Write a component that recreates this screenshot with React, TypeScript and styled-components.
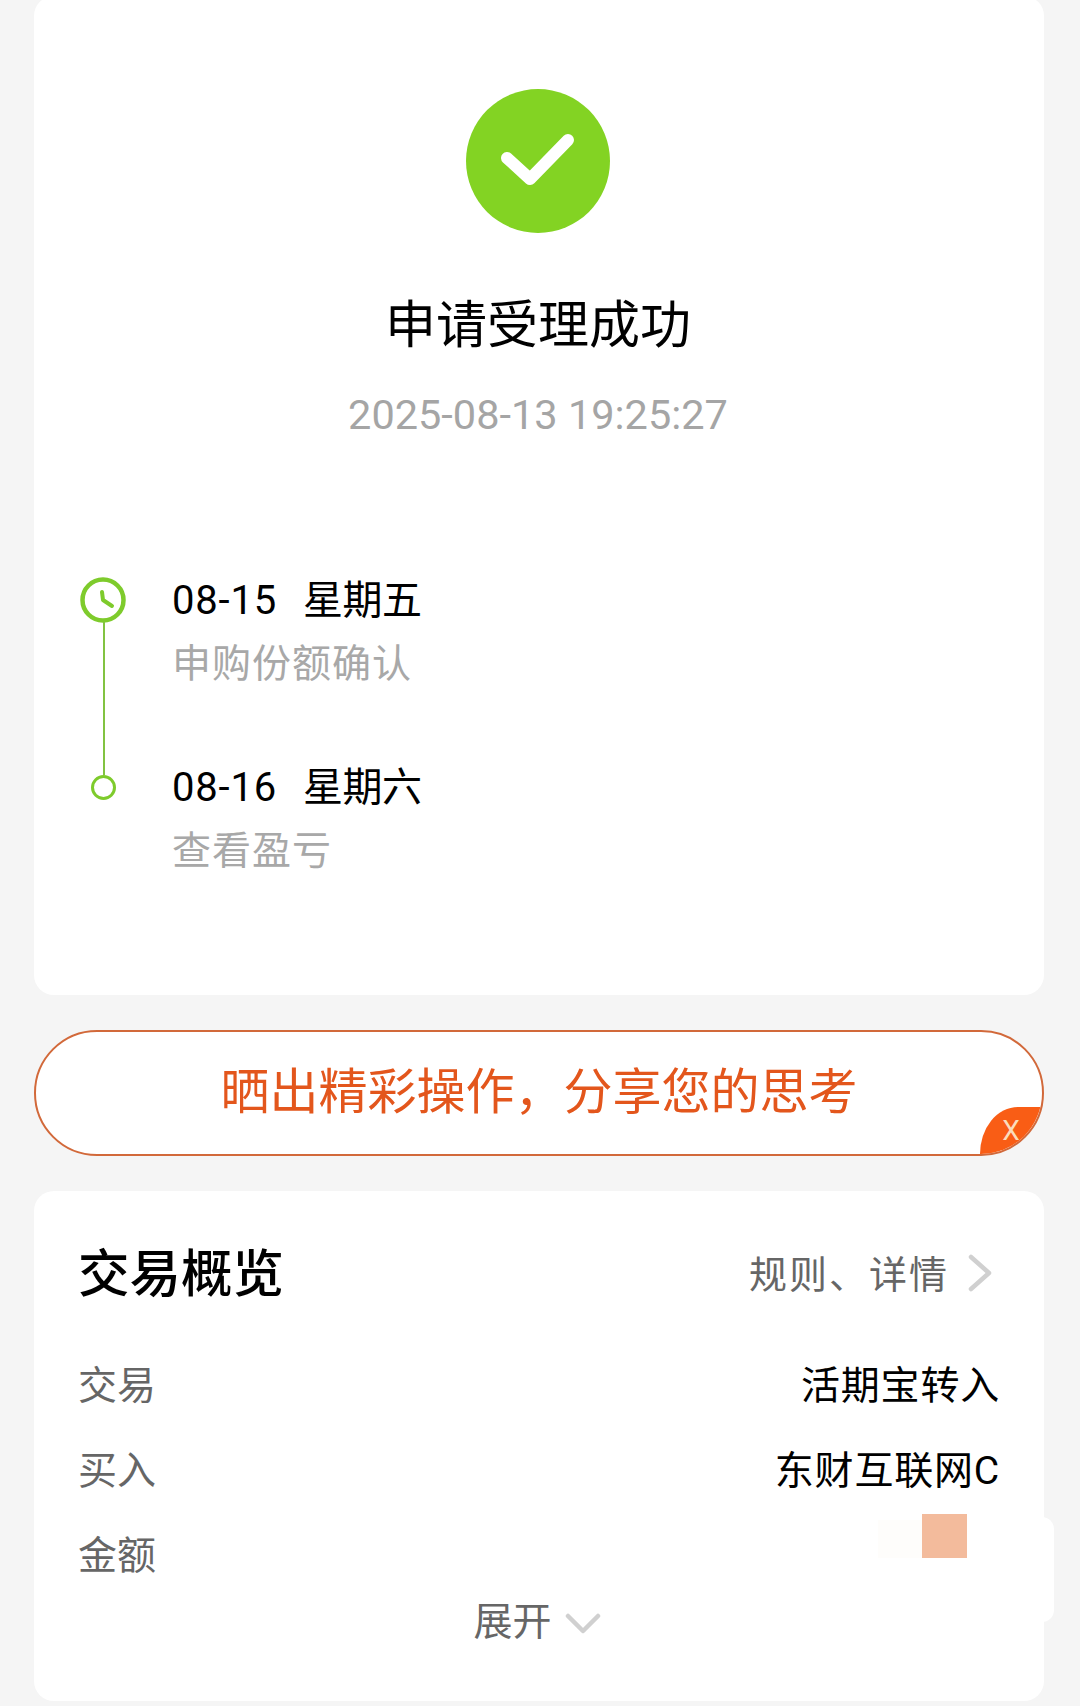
import styled, { createGlobalStyle } from 'styled-components';

const GlobalStyle = createGlobalStyle`
  html, body {
    margin: 0;
    padding: 0;
    background-color: #f5f5f5;
  }
  body {
    font-family: 'Roboto', 'Noto Sans CJK SC', 'Noto Sans', sans-serif;
    height: 1706px;
    overflow: hidden;
  }
`;

const TIMELINE = [
  { date: '08-15', week: '星期五', desc: '申购份额确认', current: true },
  { date: '08-16', week: '星期六', desc: '查看盈亏', current: false },
];

const OVERVIEW = [
  { label: '交易', value: '活期宝转入' },
  { label: '买入', value: '东财互联网C' },
  { label: '金额', value: '' },
];

const App = () => {
  return (
    <Page>
      <GlobalStyle />
      <ResultCard>
        <SuccessBadge>
          <svg width="76" height="60" viewBox="0 0 76 60" fill="none">
            <path
              d="M7 27 L30 48 L68 9"
              stroke="#fff"
              strokeWidth="12"
              strokeLinecap="round"
              strokeLinejoin="round"
            />
          </svg>
        </SuccessBadge>
        <ResultTitle>申请受理成功</ResultTitle>
        <ResultTime>2025-08-13 19:25:27</ResultTime>
        <Timeline>
          {TIMELINE.map((step) => (
            <Step key={step.date}>
              <Marker>
                {step.current ? (
                  <svg width="48" height="48" viewBox="0 0 48 48" fill="none">
                    <circle cx="24" cy="24" r="20.5" stroke="#7ecb2c" strokeWidth="4.5" />
                    <path
                      d="M23 16 L24 24 L33 30"
                      stroke="#7ecb2c"
                      strokeWidth="4"
                      strokeLinecap="round"
                      strokeLinejoin="round"
                    />
                  </svg>
                ) : (
                  <Dot />
                )}
              </Marker>
              <StepText>
                <StepDate>
                  <DateNumber>{step.date}</DateNumber>
                  <WeekDay>{step.week}</WeekDay>
                </StepDate>
                <StepDesc>{step.desc}</StepDesc>
              </StepText>
            </Step>
          ))}
        </Timeline>
      </ResultCard>

      <ShareBanner>
        <ShareText>晒出精彩操作，分享您的思考</ShareText>
        <CloseCorner>X</CloseCorner>
      </ShareBanner>

      <OverviewCard>
        <OverviewHeader>
          <OverviewTitle>交易概览</OverviewTitle>
          <RuleLink>
            规则、详情
            <svg width="24" height="38" viewBox="0 0 24 38" fill="none">
              <path
                d="M3 3 L21 19 L3 35"
                stroke="#d0d0d0"
                strokeWidth="4.5"
                strokeLinecap="round"
                strokeLinejoin="round"
              />
            </svg>
          </RuleLink>
        </OverviewHeader>
        <OverviewRows>
          {OVERVIEW.map((row) => (
            <OverviewRow key={row.label}>
              <RowLabel>{row.label}</RowLabel>
              <RowValue>{row.value}</RowValue>
            </OverviewRow>
          ))}
        </OverviewRows>
        <ExpandRow>
          展开
          <svg width="36" height="22" viewBox="0 0 36 22" fill="none">
            <path
              d="M3 3 L18 18 L33 3"
              stroke="#d0d0d0"
              strokeWidth="4.5"
              strokeLinecap="round"
              strokeLinejoin="round"
            />
          </svg>
        </ExpandRow>
        <CoverPatch>
          <CoverFaint />
          <CoverTint />
        </CoverPatch>
      </OverviewCard>
    </Page>
  );
};

const Page = styled.div`
  width: 1080px;
  padding: 0 36px 0 34px;
  box-sizing: border-box;
  display: flex;
  flex-direction: column;
  gap: 35px;
`;

const ResultCard = styled.section`
  margin-top: -4px;
  height: 999px;
  box-sizing: border-box;
  padding: 93px 2px 0 0;
  background-color: #fff;
  border-radius: 20px;
  display: flex;
  flex-direction: column;
  align-items: center;
`;

const SuccessBadge = styled.div`
  width: 144px;
  height: 144px;
  border-radius: 50%;
  background-color: #83d323;
  display: flex;
  align-items: center;
  justify-content: center;
`;

const ResultTitle = styled.h1`
  margin: 58px 0 0;
  font-size: 51px;
  line-height: 70px;
  font-weight: 400;
  color: #000;
`;

const ResultTime = styled.div`
  margin-top: 29px;
  font-size: 41.5px;
  line-height: 50px;
  color: #a5a5a5;
`;

const Timeline = styled.ol`
  list-style: none;
  margin: 136px 0 0;
  padding: 0 0 0 45px;
  align-self: stretch;
  display: flex;
  flex-direction: column;
  gap: 71px;
`;

const Step = styled.li`
  position: relative;
  display: flex;
  align-items: flex-start;
  gap: 45px;
  &:first-child::after {
    content: '';
    position: absolute;
    left: 24px;
    top: 46px;
    width: 2px;
    height: 153px;
    background-color: #82c341;
  }
`;

const Marker = styled.div`
  width: 48px;
  height: 48px;
  flex-shrink: 0;
  display: flex;
  align-items: center;
  justify-content: center;
`;

const Dot = styled.div`
  position: relative;
  z-index: 1;
  width: 25px;
  height: 25px;
  box-sizing: border-box;
  border: 3px solid #7ecb2c;
  border-radius: 50%;
  background-color: #fff;
`;

const StepText = styled.div`
  display: flex;
  flex-direction: column;
  gap: 10px;
`;

const StepDate = styled.div`
  display: flex;
  gap: 26px;
  font-size: 40px;
  line-height: 50px;
  color: #000;
`;

const DateNumber = styled.span`
  letter-spacing: 0.8px;
`;

const WeekDay = styled.span`
  letter-spacing: -0.5px;
`;

const StepDesc = styled.div`
  font-size: 39px;
  line-height: 56px;
  letter-spacing: 1px;
  color: #a8a8a8;
`;

const ShareBanner = styled.div`
  position: relative;
  height: 126px;
  box-sizing: border-box;
  border: 2px solid #d2693a;
  border-radius: 63px;
  background-color: #fff;
  overflow: hidden;
  display: flex;
  align-items: center;
  justify-content: center;
`;

const ShareText = styled.div`
  font-size: 49px;
  line-height: 70px;
  color: #e3561c;
`;

const CloseCorner = styled.div`
  position: absolute;
  right: 0;
  bottom: 0;
  width: 62px;
  height: 47px;
  box-sizing: border-box;
  border-top-left-radius: 38px 47px;
  background-color: #f95d15;
  color: #fbdcbc;
  font-size: 28px;
  line-height: 47px;
  text-align: center;
`;

const OverviewCard = styled.section`
  position: relative;
  height: 510px;
  box-sizing: border-box;
  padding: 46px 44px 0 44px;
  background-color: #fff;
  border-radius: 20px;
`;

const OverviewHeader = styled.div`
  display: flex;
  align-items: center;
  justify-content: space-between;
  height: 70px;
`;

const OverviewTitle = styled.h2`
  margin: 6px 0 0;
  font-size: 51.5px;
  line-height: 70px;
  font-weight: 500;
  color: #000;
`;

const RuleLink = styled.div`
  display: flex;
  align-items: center;
  gap: 19px;
  margin-right: 8px;
  padding-bottom: 2px;
  font-size: 38px;
  letter-spacing: 2px;
  color: #666;
  svg {
    margin-top: 4px;
  }
`;

const OverviewRows = styled.div`
  margin-top: 47px;
  display: flex;
  flex-direction: column;
  gap: 29px;
`;

const OverviewRow = styled.div`
  display: flex;
  align-items: center;
  justify-content: space-between;
  height: 56px;
`;

const RowLabel = styled.span`
  font-size: 39px;
  color: #666;
`;

const RowValue = styled.span`
  font-size: 39px;
  letter-spacing: 0.8px;
  color: #000;
`;

const ExpandRow = styled.div`
  position: absolute;
  left: 0;
  right: 4px;
  top: 401px;
  display: flex;
  align-items: center;
  justify-content: center;
  gap: 13px;
  font-size: 39px;
  line-height: 60px;
  color: #666;
  svg {
    margin-top: 3px;
  }
`;

const CoverPatch = styled.div`
  position: absolute;
  left: 844px;
  top: 326px;
  width: 176px;
  height: 105px;
  background-color: #fff;
  border-radius: 0 12px 12px 0;
  display: flex;
  align-items: flex-start;
`;

const CoverFaint = styled.div`
  width: 44px;
  height: 38px;
  margin-top: 3px;
  background-color: #fefdfb;
`;

const CoverTint = styled.div`
  width: 45px;
  height: 44px;
  margin-top: -3px;
  background-color: #f3bb9c;
`;

export default App;
